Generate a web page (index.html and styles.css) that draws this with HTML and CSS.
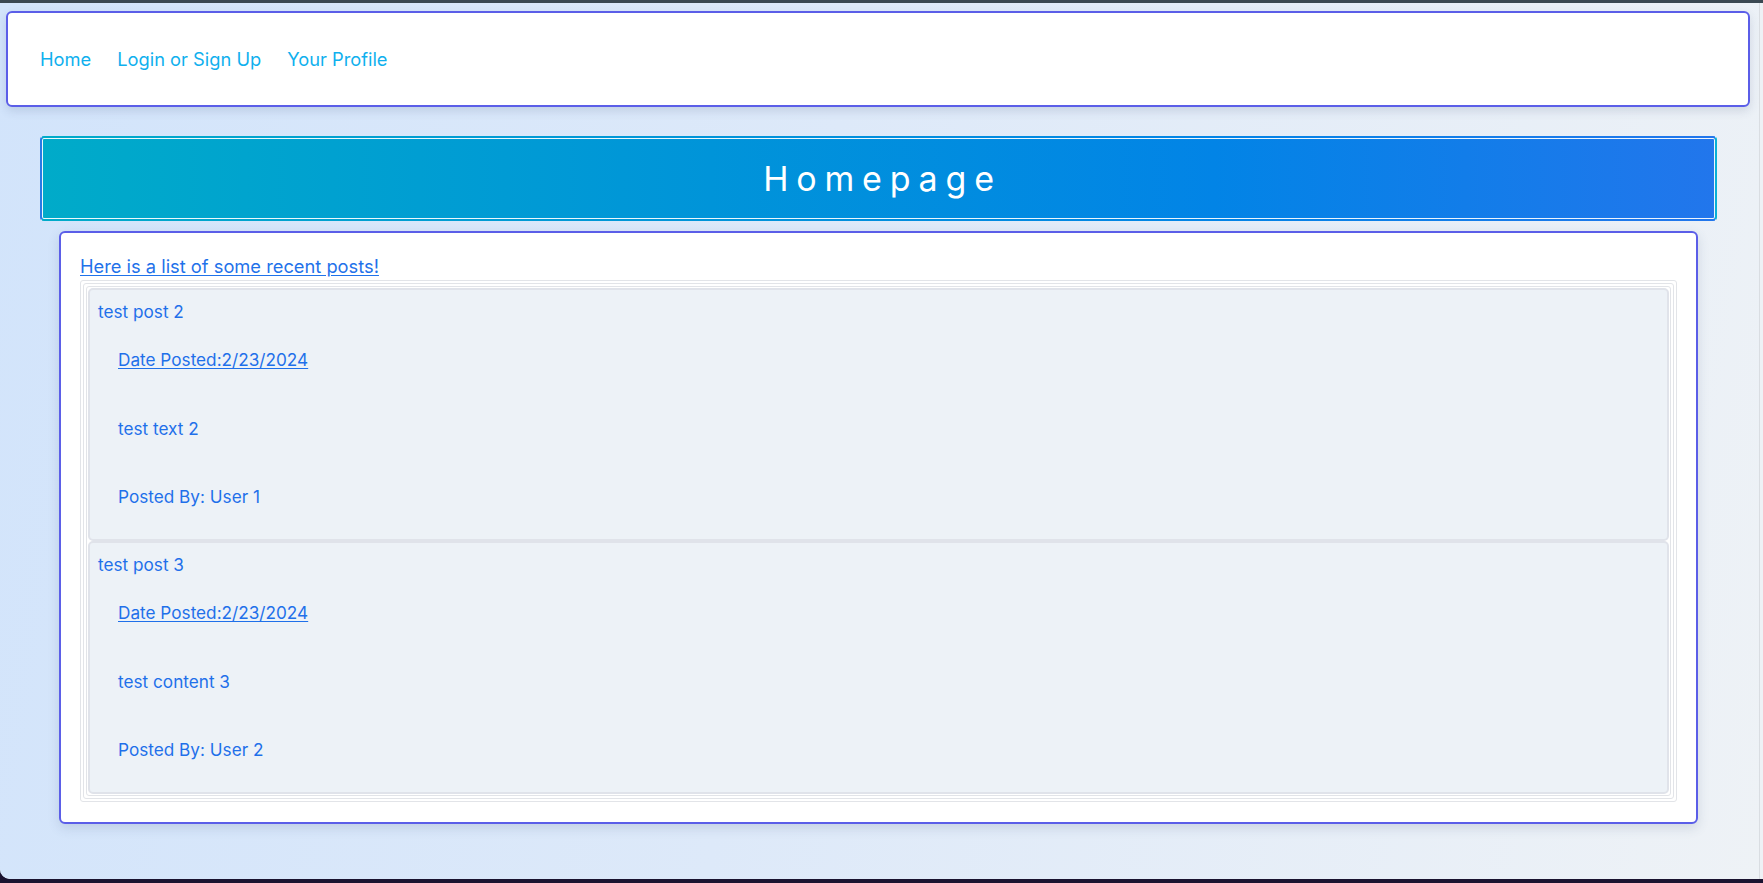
FILE: index.html
```html
<!DOCTYPE html>
<html lang="en">
<head>
<meta charset="utf-8">
<title>Homepage</title>
<link rel="stylesheet" href="styles.css">
</head>
<body>
<div class="frame">
  <div class="topbar"></div>
  <div class="window">
    <div class="page">
      <nav class="nav">
        <a class="nav-link" href="#">Home</a>
        <a class="nav-link" href="#">Login or Sign Up</a>
        <a class="nav-link" href="#">Your Profile</a>
      </nav>
      <header class="hero">
        <h1 class="hero-title">Homepage</h1>
      </header>
      <main class="card">
        <div class="intro"><a class="intro-link" href="#">Here is a list of some recent posts!</a></div>
        <div class="list">
          <div class="list-inner">
            <div class="list-inner2">
              <div class="post">
                <div class="post-title">test post 2</div>
                <div class="post-body">
                  <p class="post-line"><a class="post-date" href="#">Date Posted:2/23/2024</a></p>
                  <p class="post-line">test text 2</p>
                  <p class="post-line">Posted By: User 1</p>
                </div>
              </div>
              <div class="post">
                <div class="post-title">test post 3</div>
                <div class="post-body">
                  <p class="post-line"><a class="post-date" href="#">Date Posted:2/23/2024</a></p>
                  <p class="post-line">test content 3</p>
                  <p class="post-line">Posted By: User 2</p>
                </div>
              </div>
            </div>
          </div>
        </div>
      </main>
    </div>
    <div class="edge"></div>
  </div>
</div>
</body>
</html>
```

FILE: styles.css
```css
* { box-sizing: border-box; }
html, body {
  margin: 0;
  padding: 0;
  height: 883px;
  overflow: hidden;
  background: #1a1330;
  font-family: Inter, "Noto Sans", "Liberation Sans", sans-serif;
}
.frame {
  height: 883px;
  display: flex;
  flex-direction: column;
}
.topbar {
  height: 3px;
  background: #3a4852;
  flex: none;
}
.window {
  height: 876px;
  display: flex;
  flex: none;
  background: #eef2f6;
  border-bottom-left-radius: 10px;
  overflow: hidden;
}
.page {
  width: 1760px;
  flex: none;
  border-right: 1px solid #d9dde2;
  background: linear-gradient(100deg, #d2e4fb 0%, #dde9f9 45%, #eef2f6 100%);
  padding-top: 8px;
}
.edge {
  flex: 1;
  background: #eef2f6;
}
.nav {
  height: 96px;
  margin: 0 9px 0 6px;
  background: #fff;
  border: 2px solid #5b5ee8;
  border-radius: 6px;
  box-shadow: 0 4px 10px rgba(60, 80, 120, 0.16);
  display: flex;
  align-items: center;
  gap: 26px;
  padding-left: 32px;
}
.nav-link {
  color: #0fb0ee;
  text-decoration: none;
  font-size: 18.3px;
}
.hero {
  height: 85px;
  margin: 29px 42px 0 40px;
  border: 2px solid transparent;
  border-left-color: #2a7ae4;
  border-right-color: #08b0d6;
  border-radius: 4px;
  background: linear-gradient(90deg, #00abc9 0%, #0094d9 40%, #0284e6 70%, #2276ec 100%) border-box;
  box-shadow: inset 0 0 0 1px rgba(255, 255, 255, 0.92);
  display: flex;
  align-items: center;
  justify-content: center;
}
.hero-title {
  margin: 0;
  color: #fff;
  font-weight: 400;
  font-size: 34px;
  letter-spacing: 7.8px;
  padding-left: 8px;
}
.card {
  display: block;
  margin: 10px 61px 0 59px;
  background: #fff;
  border: 2px solid #5b5ee8;
  border-radius: 6px;
  box-shadow: 0 4px 12px rgba(60, 80, 120, 0.16);
  padding: 19px 19px 20px 19px;
}
.intro {
  line-height: 28px;
  font-size: 18.3px;
}
.intro-link {
  color: #1f72ea;
  text-decoration: underline;
  text-underline-offset: 2px;
}
.list {
  border: 1px solid #e2e4e8;
  border-radius: 3px;
  padding: 2px;
}
.list-inner {
  border: 1px solid #e2e4e8;
  border-radius: 3px;
  padding: 2px;
}
.list-inner2 {
  border: 1px solid #e2e4e8;
  border-radius: 3px;
  padding: 1px;
}
.post {
  background: #edf2f7;
  border: 2px solid #e0e3ea;
  border-radius: 5px;
  padding: 10px 8px 12px 8px;
  color: #1f70ea;
  font-size: 17.2px;
  line-height: 24px;
}
.post-title {
  height: 24px;
}
.post-body {
  padding-left: 20px;
  margin: 24px 0 18px 0;
  display: flex;
  flex-direction: column;
  gap: 44.5px;
}
.post-line {
  margin: 0;
  height: 24px;
}
.post-date {
  color: #1f70ea;
  text-decoration: underline;
  text-underline-offset: 2px;
}
```
